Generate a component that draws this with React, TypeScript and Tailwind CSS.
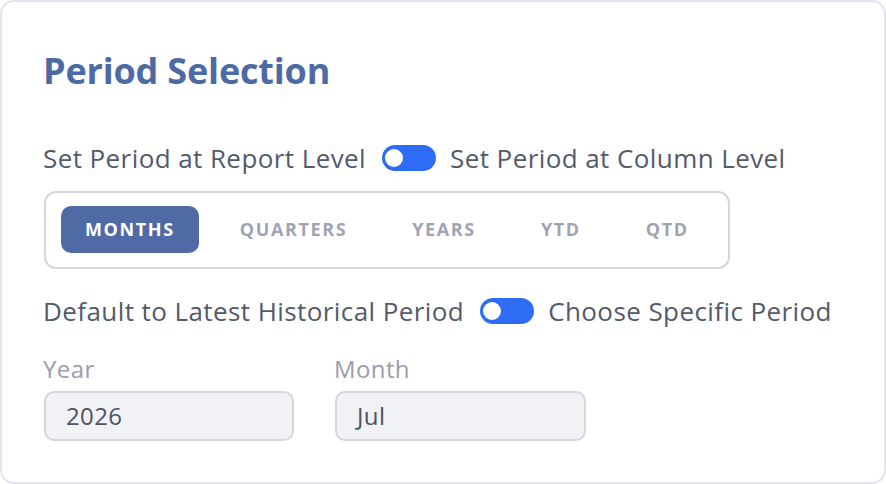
import React from "react";

function Toggle({ className }: { className: string }) {
  return (
    <div className={"w-[54px] h-[26px] rounded-full bg-[#2f6cf5] flex items-center pl-[3px] shrink-0 " + className}>
      <div className="w-[18px] h-[18px] rounded-full bg-white" />
    </div>
  );
}

export default function App() {
  const tabs = ["MONTHS", "QUARTERS", "YEARS", "YTD", "QTD"];
  return (
    <div
      className="w-[886px] h-[484px] bg-white"
      style={{ fontFamily: "'Open Sans', 'Noto Sans', sans-serif" }}
    >
      <div className="w-full h-full border-2 border-[#e4e4ef] rounded-[14px] pl-[41px] pt-[47px] flex flex-col items-start">
        <h1 className="text-[36px] leading-[44px] font-bold text-[#4d6aa5] tracking-[-0.005em]">Period Selection</h1>

        <div className="mt-[52px] flex items-center text-[26px] leading-[26px] tracking-[0.016em] text-[#535a6b]">
          <span>Set Period at Report Level</span>
          <Toggle className="ml-[16px] mr-[14px]" />
          <span>Set Period at Column Level</span>
        </div>

        <div className="mt-[20px] ml-[1px] border-2 border-[#d6d6db] rounded-[12px] pl-[15px] pr-[15px] pt-[13px] pb-[14px] flex gap-[17px]">
          {tabs.map((t, i) => (
            <div
              key={t}
              className={
                i === 0
                  ? "h-[47px] px-[24px] flex items-center rounded-[10px] bg-[#4f6aa4] text-white text-[18px] font-bold tracking-[0.09em]"
                  : "h-[47px] px-[24px] flex items-center rounded-[10px] text-[#a0a3b4] text-[18px] font-bold tracking-[0.09em]"
              }
            >
              {t}
            </div>
          ))}
        </div>

        <div className="mt-[29px] flex items-center text-[26px] leading-[26px] tracking-[0.016em] text-[#535a6b]">
          <span>Default to Latest Historical Period</span>
          <Toggle className="ml-[16px] mr-[14px]" />
          <span>Choose Specific Period</span>
        </div>

        <div className="mt-[31px] flex gap-[41px] ml-[1px]">
          <div className="flex flex-col">
            <span className="text-[24px] leading-[28px] tracking-[0.016em] text-[#9b9dac] -ml-[1px]">Year</span>
            <div className="mt-[8px] w-[250px] h-[50px] rounded-[10px] border-2 border-[#d6d6db] bg-[#f1f2f6] pl-[20px] flex items-center text-[24px] tracking-[0.016em] text-[#4e5362]">
              2026
            </div>
          </div>
          <div className="flex flex-col">
            <span className="text-[24px] leading-[28px] tracking-[0.016em] text-[#9b9dac] -ml-[1px]">Month</span>
            <div className="mt-[8px] w-[251px] h-[50px] rounded-[10px] border-2 border-[#d6d6db] bg-[#f1f2f6] pl-[20px] flex items-center text-[24px] tracking-[0.016em] text-[#4e5362]">
              Jul
            </div>
          </div>
        </div>
      </div>
    </div>
  );
}
